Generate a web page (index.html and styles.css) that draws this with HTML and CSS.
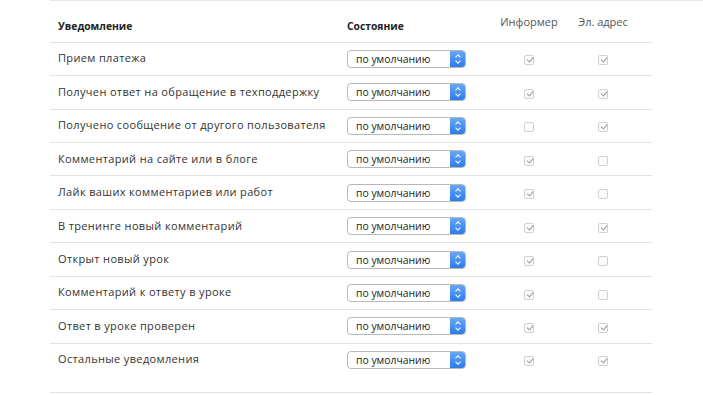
FILE: index.html
```
<!DOCTYPE html>
<html lang="ru">
<head>
	<meta charset="UTF-8"/>
	<title>Уведомления</title>
	<link rel="stylesheet" href="styles.css">
</head>
<body>
	<div class="page">
	<div class="notify">
		<div class="row head">
			<div class="name"><b>Уведомление</b></div>
			<div class="state"><b>Состояние</b></div>
			<div class="col">Информер</div>
			<div class="col">Эл. адрес</div>
		</div>

		<div class="row">
			<div class="name">Прием платежа</div>
			<div class="state"><div class="select"><span>по умолчанию</span><i></i></div></div>
			<div class="col"><span class="check on"></span></div>
			<div class="col"><span class="check on"></span></div>
		</div>
		<div class="row">
			<div class="name">Получен ответ на обращение в техподдержку</div>
			<div class="state"><div class="select"><span>по умолчанию</span><i></i></div></div>
			<div class="col"><span class="check on"></span></div>
			<div class="col"><span class="check on"></span></div>
		</div>
		<div class="row">
			<div class="name">Получено сообщение от другого пользователя</div>
			<div class="state"><div class="select"><span>по умолчанию</span><i></i></div></div>
			<div class="col"><span class="check"></span></div>
			<div class="col"><span class="check on"></span></div>
		</div>
		<div class="row">
			<div class="name">Комментарий на сайте или в блоге</div>
			<div class="state"><div class="select"><span>по умолчанию</span><i></i></div></div>
			<div class="col"><span class="check on"></span></div>
			<div class="col"><span class="check"></span></div>
		</div>
		<div class="row">
			<div class="name">Лайк ваших комментариев или работ</div>
			<div class="state"><div class="select"><span>по умолчанию</span><i></i></div></div>
			<div class="col"><span class="check on"></span></div>
			<div class="col"><span class="check"></span></div>
		</div>
		<div class="row">
			<div class="name">В тренинге новый комментарий</div>
			<div class="state"><div class="select"><span>по умолчанию</span><i></i></div></div>
			<div class="col"><span class="check on"></span></div>
			<div class="col"><span class="check on"></span></div>
		</div>
		<div class="row">
			<div class="name">Открыт новый урок</div>
			<div class="state"><div class="select"><span>по умолчанию</span><i></i></div></div>
			<div class="col"><span class="check on"></span></div>
			<div class="col"><span class="check"></span></div>
		</div>
		<div class="row">
			<div class="name">Комментарий к ответу в уроке</div>
			<div class="state"><div class="select"><span>по умолчанию</span><i></i></div></div>
			<div class="col"><span class="check on"></span></div>
			<div class="col"><span class="check"></span></div>
		</div>
		<div class="row">
			<div class="name">Ответ в уроке проверен</div>
			<div class="state"><div class="select"><span>по умолчанию</span><i></i></div></div>
			<div class="col"><span class="check on"></span></div>
			<div class="col"><span class="check on"></span></div>
		</div>
		<div class="row last">
			<div class="name">Остальные уведомления</div>
			<div class="state"><div class="select"><span>по умолчанию</span><i></i></div></div>
			<div class="col"><span class="check on"></span></div>
			<div class="col"><span class="check on"></span></div>
		</div>
	</div>
	</div>
</body>
</html>
```

FILE: styles.css
```
*{
	margin: 0;
	padding: 0;
	box-sizing: border-box;
}
body{
	font-family: "Open Sans", "Liberation Sans", sans-serif;
	font-size: 11px;
	color: #333;
	background: #fff;
}
.page{
	margin-left: 50px;
	border-top: 1px solid #e8e8e8;
}
.notify{
	width: 602px;
}
.row{
	display: grid;
	grid-template-columns: 297px 143px 78px 70px 14px;
	align-items: center;
	height: 33.45px;
	border-bottom: 1px solid #e2e2e2;
}
.row.head{
	height: 41.7px;
}
.row.head b{
	font-size: 10.3px;
	font-weight: 700;
	color: #222;
	position: relative;
	top: 4px;
}
.row.head .col{
	color: #555;
}
.row.last{
	height: 49px;
	padding-bottom: 16px;
}
.name{
	padding-left: 8px;
	white-space: nowrap;
	letter-spacing: .35px;
	position: relative;
	top: -1px;
}
.row.head .name{
	letter-spacing: 0;
	top: 0;
}
.col{
	text-align: center;
}
.select{
	width: 119px;
	height: 18px;
	border: 1px solid #b8b8b8;
	border-radius: 4px;
	display: flex;
	align-items: center;
	overflow: hidden;
	background: #fff;
}
.select span{
	flex: 1;
	padding-left: 8px;
	font-size: 10.4px;
	color: #222;
}
.select i{
	width: 16px;
	height: 18px;
	margin-right: -1px;
	background: linear-gradient(#6aaaf9, #2b78ec);
	position: relative;
}
.select i:before, .select i:after{
	content: "";
	position: absolute;
	left: 6px;
	width: 3px;
	height: 3px;
	border-left: 1px solid #fff;
	border-top: 1px solid #fff;
}
.select i:before{
	top: 5px;
	transform: rotate(45deg);
}
.select i:after{
	top: 9px;
	transform: rotate(225deg);
}
.check{
	display: inline-block;
	width: 10px;
	height: 10px;
	border: 1px solid #d0d0d0;
	border-radius: 2px;
	vertical-align: middle;
	position: relative;
	background: #fcfcfc;
}
.check.on:after{
	content: "";
	position: absolute;
	left: 2.5px;
	top: 0px;
	width: 3px;
	height: 5px;
	border-right: 1px solid #999;
	border-bottom: 1px solid #999;
	transform: rotate(40deg);
}
```
